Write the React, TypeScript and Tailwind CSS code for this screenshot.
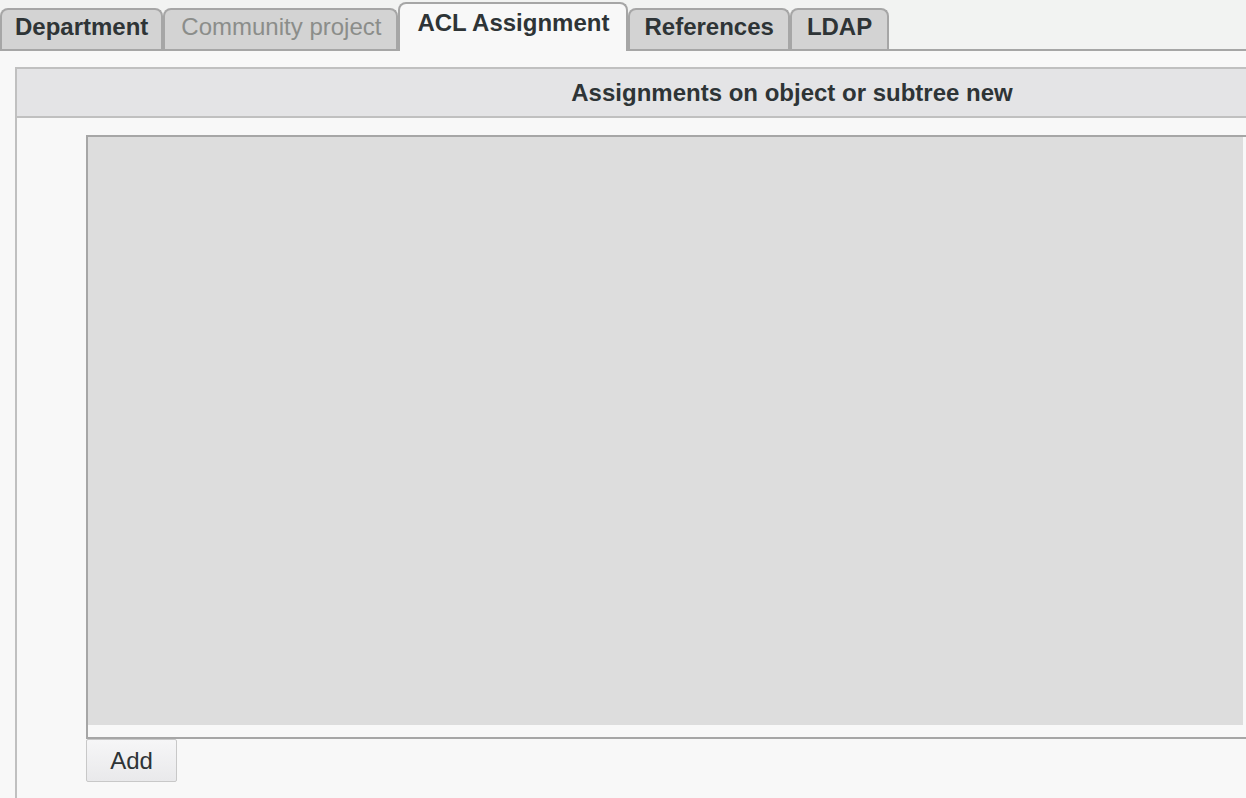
import React from 'react';

const font = { fontFamily: '"Liberation Sans", Arial, sans-serif' };

type Tab = { label: string; active?: boolean; disabled?: boolean; pad: string };

const tabs: Tab[] = [
  { label: 'Department', pad: 'px-[13px]' },
  { label: 'Community project', disabled: true, pad: 'pl-[16px] pr-[15px]' },
  { label: 'ACL Assignment', active: true, pad: 'px-[17px]' },
  { label: 'References', pad: 'px-[14px]' },
  { label: 'LDAP', pad: 'pl-[15px] pr-[15px]' },
];

function TabBar() {
  return (
    <div className="h-[51px] bg-[#f2f3f2] border-b-2 border-[#a6a6a6] flex items-end">
      {tabs.map((t) =>
        t.active ? (
          <div
            key={t.label}
            className={`h-[49px] mb-[-2px] pt-[5px] border-2 border-b-0 border-[#a6a6a6] rounded-t-[8px] bg-[#f8f8f8] text-[24px] leading-[28px] font-bold text-[#2e3436] whitespace-nowrap ${t.pad}`}
          >
            {t.label}
          </div>
        ) : (
          <div
            key={t.label}
            className={`h-[41px] pt-[3px] border-2 border-b-0 border-[#a6a6a6] rounded-t-[8px] bg-[#d3d3d3] text-[24px] leading-[28px] whitespace-nowrap ${t.pad} ${
              t.disabled ? 'text-[#8b8d8a]' : 'font-bold text-[#2e3436]'
            }`}
          >
            {t.label}
          </div>
        )
      )}
    </div>
  );
}

export default function App() {
  return (
    <div className="w-[1246px] h-[798px] overflow-hidden bg-[#f8f8f8]" style={font}>
      <TabBar />
      <div className="pl-[15px] pt-[16px]">
        <div className="w-[1552px] h-[760px] border-t-2 border-l-2 border-[#c0c0c0] bg-[#f8f8f8]">
          {/* Header */}
          <div className="h-[49px] bg-[#e4e4e6] border-b-2 border-[#c0c0c0] flex items-center justify-center text-[24px] font-bold text-[#2e3436]">
            Assignments on object or subtree new
          </div>

          {/* Body */}
          <div className="pl-[69px] pt-[17px]">
            <div className="border-t-2 border-l-2 border-b-2 border-[#a6a6a6] pb-[12px]">
              <div className="w-[1155px] h-[588px] bg-[#dddddd]" />
            </div>
            <button className="w-[91px] h-[43px] border border-[#c8c8c8] rounded-[2px] bg-gradient-to-b from-[#f6f6f7] to-[#e9e9eb] text-[24px] text-[#2e3436]">
              Add
            </button>
          </div>
        </div>
      </div>
    </div>
  );
}
